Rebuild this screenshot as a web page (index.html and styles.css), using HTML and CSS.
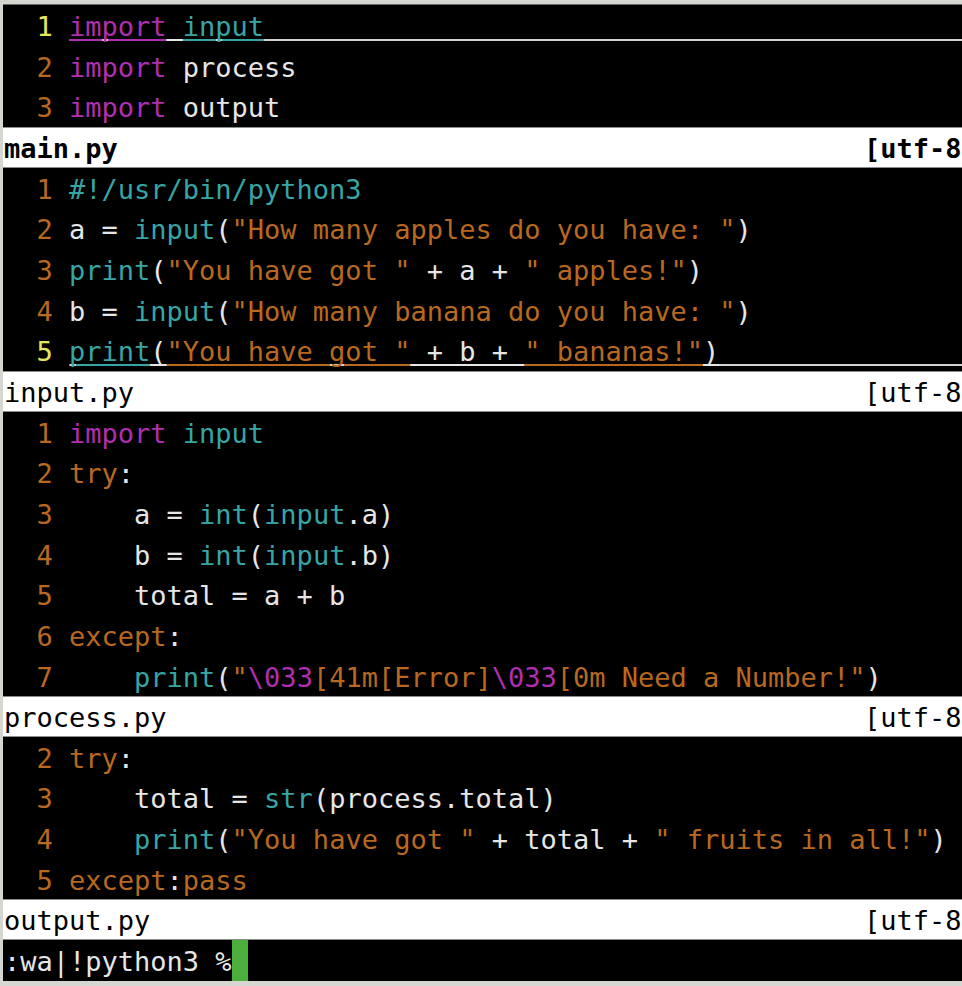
FILE: index.html
```html
<!DOCTYPE html>
<html lang="en">
<head>
    <meta charset="UTF-8">
    <meta name="viewport" content="width=device-width, initial-scale=1.0">
    <title>vim - main.py</title>
    <link rel="stylesheet" href="styles.css">
</head>
<body>
    <div class="term">
        <!-- main.py -->
        <section class="win">
            <div class="line cur"><span class="num">1</span><span class="code"><span class="kw">import</span><span class="tx"> </span><span class="fn">input</span></span></div>
            <div class="line"><span class="num">2</span><span class="code"><span class="kw">import</span> process</span></div>
            <div class="line"><span class="num">3</span><span class="code"><span class="kw">import</span> output</span></div>
        </section>
        <div class="status active"><span>main.py</span><span>[utf-8</span></div>

        <!-- input.py -->
        <section class="win">
            <div class="line"><span class="num">1</span><span class="code"><span class="fn">#!/usr/bin/python3</span></span></div>
            <div class="line"><span class="num">2</span><span class="code">a = <span class="fn">input</span>(<span class="str">"How many apples do you have: "</span>)</span></div>
            <div class="line"><span class="num">3</span><span class="code"><span class="fn">print</span>(<span class="str">"You have got "</span> + a + <span class="str">" apples!"</span>)</span></div>
            <div class="line"><span class="num">4</span><span class="code">b = <span class="fn">input</span>(<span class="str">"How many banana do you have: "</span>)</span></div>
            <div class="line cur"><span class="num">5</span><span class="code"><span class="fn">print</span><span class="tx">(</span><span class="str">"You have got "</span><span class="tx"> + b + </span><span class="str">" bananas!"</span><span class="tx">)</span></span></div>
        </section>
        <div class="status"><span>input.py</span><span>[utf-8</span></div>

        <!-- process.py -->
        <section class="win">
            <div class="line"><span class="num">1</span><span class="code"><span class="kw">import</span> <span class="fn">input</span></span></div>
            <div class="line"><span class="num">2</span><span class="code"><span class="str">try</span>:</span></div>
            <div class="line"><span class="num">3</span><span class="code">    a = <span class="fn">int</span>(<span class="fn">input</span>.a)</span></div>
            <div class="line"><span class="num">4</span><span class="code">    b = <span class="fn">int</span>(<span class="fn">input</span>.b)</span></div>
            <div class="line"><span class="num">5</span><span class="code">    total = a + b</span></div>
            <div class="line"><span class="num">6</span><span class="code"><span class="str">except</span>:</span></div>
            <div class="line"><span class="num">7</span><span class="code">    <span class="fn">print</span>(<span class="str">"</span><span class="kw">\033</span><span class="str">[41m[Error]</span><span class="kw">\033</span><span class="str">[0m Need a Number!"</span>)</span></div>
        </section>
        <div class="status"><span>process.py</span><span>[utf-8</span></div>

        <!-- output.py -->
        <section class="win">
            <div class="line"><span class="num">2</span><span class="code"><span class="str">try</span>:</span></div>
            <div class="line"><span class="num">3</span><span class="code">    total = <span class="fn">str</span>(process.total)</span></div>
            <div class="line"><span class="num">4</span><span class="code">    <span class="fn">print</span>(<span class="str">"You have got "</span> + total + <span class="str">" fruits in all!"</span>)</span></div>
            <div class="line"><span class="num">5</span><span class="code"><span class="str">except</span>:<span class="str">pass</span></span></div>
        </section>
        <div class="status"><span>output.py</span><span>[utf-8</span></div>

        <div class="line cmdline"><span class="code">:wa|!python3 %</span><span class="cursor"></span></div>
    </div>
</body>
</html>
```

FILE: styles.css
```css
body {
    margin: 0;
    padding: 5px 0 5px 3px;
    background-color: #d6d6d0;
    font-family: "DejaVu Sans Mono", monospace;
    font-size: 27px;
    overflow: hidden;
}

.term {
    background-color: #000;
    color: #e6e6e6;
    box-shadow: 0 -1px #6a6a6a;
}

.line,
.status {
    display: flex;
    height: 40.67px;
    line-height: 43.67px;
    padding-left: 1px;
    overflow: hidden;
    white-space: pre;
}

.num {
    flex: none;
    width: 3ch;
    margin-right: 1ch;
    text-align: right;
    color: #b8691f;
}

.code {
    flex: 1;
}

.kw {
    color: #b02eb0;
}
.fn {
    color: #38a5a5;
}
.str {
    color: #b8691f;
}
.tx {
    color: #e6e6e6;
}

/* cursorline */
.cur .num {
    color: #e6e65a;
}
.cur .code {
    background: linear-gradient(#d2d2d2, #d2d2d2) 0 34px / 100% 2px no-repeat;
}
.cur .code > span {
    text-decoration: underline;
    text-decoration-thickness: 2px;
    text-underline-offset: 3px;
}

.status {
    display: grid;
    grid-template-columns: 52.9ch 1fr;
    background-color: #fff;
    color: #000;
    box-shadow: inset 0 1px #8c8c8c, inset 0 -1px #8c8c8c;
}
.status.active {
    font-weight: bold;
}

.cmdline .code {
    flex: none;
}
.cursor {
    width: 1ch;
    background-color: #4cae3c;
}
```
